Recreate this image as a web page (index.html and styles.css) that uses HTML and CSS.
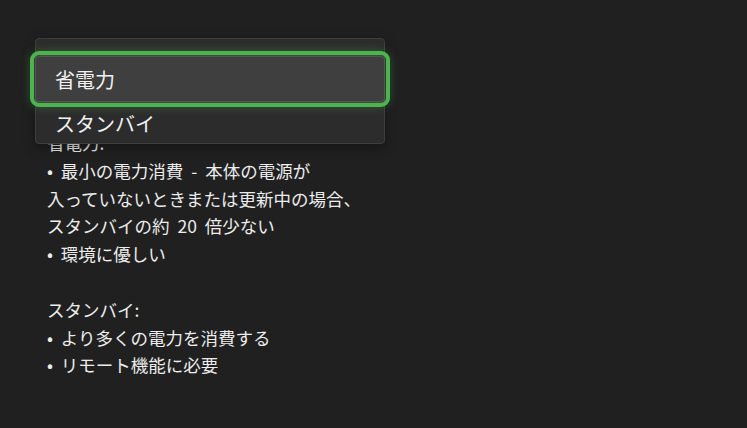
FILE: index.html
```html
<!DOCTYPE html>
<html lang="ja">
<head>
  <meta charset="UTF-8" />
  <meta name="viewport" content="width=device-width, initial-scale=1.0" />
  <title>電源モード</title>
  <link rel="stylesheet" href="styles.css">
</head>
<body>
  <div class="screen">
    <div class="info">
      <p>省電力:</p>
      <p>• 最小の電力消費 - 本体の電源が</p>
      <p>入っていないときまたは更新中の場合、</p>
      <p>スタンバイの約 20 倍少ない</p>
      <p>• 環境に優しい</p>
      <p>&nbsp;</p>
      <p>スタンバイ:</p>
      <p>• より多くの電力を消費する</p>
      <p>• リモート機能に必要</p>
    </div>

    <div class="menu">
      <div class="menu-item selected">省電力</div>
      <div class="menu-item">スタンバイ</div>
    </div>
  </div>
</body>
</html>
```

FILE: styles.css
```css
* {
  box-sizing: border-box;
}
body {
  margin: 0;
  background: #202020;
  color: #ececec;
  font-family: "Noto Sans CJK JP", "Noto Sans", sans-serif;
}
.screen {
  position: relative;
  width: 747px;
  height: 428px;
  padding: 129px 0 0 47px;
}
.info p {
  margin: 0;
  font-size: 17.5px;
  line-height: 27.8px;
  word-spacing: 4px;
}
.menu {
  position: absolute;
  left: 35px;
  top: 38px;
  width: 350px;
  height: 106px;
  padding-top: 17px;
  background: #2c2c2c;
  border: 1px solid #3e3e3e;
  border-radius: 4px;
  box-shadow: 0 4px 12px rgba(0, 0, 0, 0.35);
}
.menu-item {
  height: 44px;
  padding-left: 19px;
  display: flex;
  align-items: center;
  font-size: 20px;
  color: #f2f2f2;
}
.menu-item.selected {
  margin: 0 -1px;
  height: 46px;
  background: #3f3f3f;
  border: 1px solid #555;
  border-radius: 4px;
  outline: 4px solid #4cb34f;
  outline-offset: 1px;
  box-shadow: 0 0 10px 5px rgba(76, 179, 79, 0.35);
}
.menu-item + .menu-item {
  height: 42px;
}
```
